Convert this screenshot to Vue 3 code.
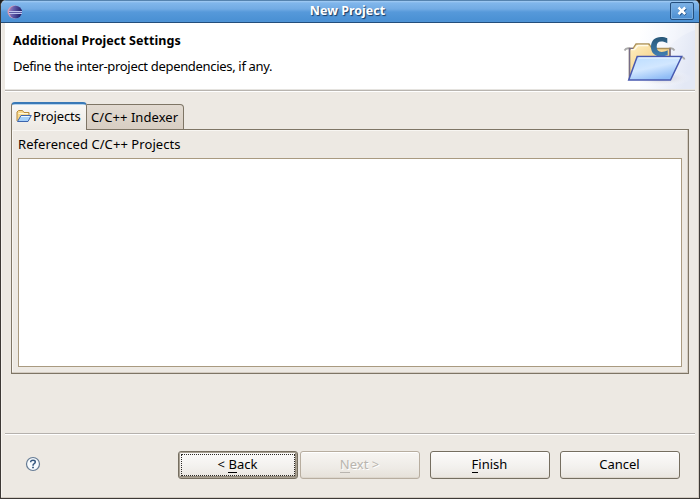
<script setup>
const buttons = [
  { before: '< ', key: 'B', after: 'ack', kind: 'default' },
  { before: '', key: 'N', after: 'ext >', kind: 'disabled' },
  { before: '', key: 'F', after: 'inish', kind: 'finish' },
  { before: 'Cancel', key: '', after: '', kind: 'cancel' },
]
</script>

<template>
  <div class="window">
    <header class="titlebar">
      <svg class="logo" width="16" height="16" viewBox="0 0 16 16">
        <defs>
          <linearGradient id="orb" x1="0" x2="1" y1="0" y2="0.2">
            <stop offset="0" stop-color="#b487b8" /><stop offset=".4" stop-color="#625cab" /><stop offset="1" stop-color="#22226d" />
          </linearGradient>
        </defs>
        <ellipse cx="7.5" cy="8" rx="7" ry="6.5" fill="#d79bb5" />
        <ellipse cx="8.500" cy="8" rx="6.500" ry="6.300" fill="url(#orb)" />
        <path d="M2 7.500H15M2 9.500H15" stroke="#bfc5ed" stroke-width="1" />
        <path d="M2 8.500H15" stroke="#5959a1" stroke-width="1" />
      </svg>
      <h1>New Project</h1>
      <button class="close" aria-label="Close">
        <svg width="22" height="16" viewBox="0 0 22 16">
          <path d="M8.300 5.300l6.400 6.400M14.700 5.300l-6.400 6.400" stroke="#24548b" stroke-width="3" />
          <path d="M7.500 4.500l6.700 6.700M14.200 4.500l-6.700 6.700" stroke="#fff" stroke-width="2.500" />
        </svg>
      </button>
    </header>

    <section class="banner">
      <div class="banner-text">
        <h2>Additional Project Settings</h2>
        <p>Define the inter-project dependencies, if any.</p>
      </div>
      <svg class="banner-art" width="75" height="66" viewBox="620 23 75 66">
        <defs>
          <linearGradient id="sweep" x1="0" y1="0" x2="1" y2="0.300">
            <stop offset="0" stop-color="#fff" /><stop offset=".4" stop-color="#f7f9fe" /><stop offset="1" stop-color="#e3e8f5" />
          </linearGradient>
          <linearGradient id="back" x1="0" x2="1" y1="0" y2="1">
            <stop offset="0" stop-color="#fff0c3" /><stop offset="1" stop-color="#edbe63" />
          </linearGradient>
          <linearGradient id="front" x1="0" x2="0.500" y1="0" y2="1">
            <stop offset="0" stop-color="#b9dcff" /><stop offset=".55" stop-color="#d2e7ff" /><stop offset="1" stop-color="#8fbcf6" />
          </linearGradient>
          <linearGradient id="letter" x1="0" x2="0" y1="0" y2="1">
            <stop offset="0" stop-color="#285778" /><stop offset="1" stop-color="#4280b3" />
          </linearGradient>
          <radialGradient id="shade"><stop offset="0" stop-color="#bcbccb" /><stop offset="1" stop-color="#fff" stop-opacity="0" /></radialGradient>
        </defs>
        <path d="M640 23H695V89H640Z" fill="url(#sweep)" />
        <path d="M695 23V30Q672 38 660 60V23Z" fill="#fff" opacity=".25" />
        <ellipse cx="662" cy="78" rx="30" ry="8" fill="url(#shade)" />
        <path d="M624.500 50.500Q626 47.500 630 48.500M669 48.500Q673 47.500 674.500 50.500M680 57.500Q684 56.500 684.500 59.500" fill="none" stroke="#aaa" stroke-width="1.800" />
        <path d="M629.500 79V48.500H633L636 44H649L652 48.500H670V79Z" fill="url(#back)" stroke="#ad925b" stroke-width="1.300" />
        <path d="M629.500 79V48.500H633M670 48.500V57" fill="none" stroke="#766d87" stroke-width="1.500" />
        <path d="M631 49.700H634.500L638 45.500H648" fill="none" stroke="#fffbe9" stroke-width="1.300" />
        <path d="M667.300 38.200V43.200C665.300 42.100 663.400 41.500 661.400 41.500C658.100 41.500 656.700 43.300 656.700 46.700C656.700 50.100 658.300 51.900 661.600 51.900C663.800 51.900 665.600 51.400 667.700 50.200V55C665.700 55.900 663.200 56.400 660.600 56.400C654.700 56.400 651 52.700 651 46.800C651 40.700 654.900 37 661 37C663.500 37 665.500 37.400 667.300 38.200Z" fill="url(#letter)" />
        <path d="M637.200 56.500H681.700L670.500 80.100H628.700Z" fill="url(#front)" stroke="#4859b0" stroke-width="1.500" />
        <path d="M638.500 58H679.500" stroke="#edf7ff" stroke-width="1.200" />
      </svg>
    </section>

    <main class="content">
      <nav class="tabs">
        <div class="tab active">
          <svg width="16" height="16" viewBox="0 0 16 16">
            <path d="M1 13V4L2.500 2.500H6.500L8 4.500H13V7" fill="#f8d98c" stroke="#b98b3d" />
            <path d="M2.500 5.500H12" stroke="#fff8dc" />
            <path d="M5 7.500H15.300L12 13.500H1.500Z" fill="#a4d0fa" stroke="#3d65ad" />
            <path d="M5 8.500H13.500" stroke="#edf8ff" />
          </svg>
          <span class="t-projects">Projects</span>
        </div>
        <div class="tab"><span class="t-indexer">C/C++ Indexer</span></div>
      </nav>
      <section class="panel">
        <div class="list-label"><span>Referenced C/C++ Projects</span></div>
        <div class="list"></div>
      </section>
    </main>

    <footer class="footer">
      <svg class="help" width="16" height="16" viewBox="0 0 16 16">
        <circle cx="8" cy="8" r="6.500" fill="#f7fbfe" stroke="#657b94" stroke-width="1.200" />
        <path d="M5.700 6.200V5.500Q5.900 4.300 8 4.300Q10.300 4.300 10.300 6Q10.300 7 9.200 7.700Q8 8.400 8 9.700" fill="none" stroke="#34577f" stroke-width="1.500" />
        <path d="M7.100 10.700H8.900V12.300H7.100Z" fill="#34577f" />
      </svg>
      <div class="actions">
        <button v-for="b in buttons" :key="b.kind" :class="['btn', b.kind]" :disabled="b.kind === 'disabled'">
          <span class="caption">{{ b.before }}<span v-if="b.key" class="key">{{ b.key }}</span>{{ b.after }}</span>
        </button>
      </div>
    </footer>
  </div>
</template>

<style>
body { margin: 0; background: #1d1d1d; overflow: hidden; }
</style>

<style scoped>
* { box-sizing: border-box; }
h1, h2, p { margin: 0; }
.window {
  width: 700px; height: 499px; display: flex; flex-direction: column;
  background: #ede9e3; border: 1px solid #3d3936; border-top: 0;
  border-radius: 6px 6px 0 0; overflow: hidden;
  font: 13px/16px "Noto Sans", sans-serif; color: #000;
  box-shadow: inset -1px -1px #d2cbc2, inset 1px 0 #f6f3ef;
}
.titlebar {
  height: 23px; flex: none; display: grid; grid-template-columns: 30px 1fr 30px;
  background: linear-gradient(#a4cdf4 0, #80b6eb 2px, #72abe4 8px, #5699da 11px, #4b91d4 19px, #4f94d5 21px);
  border-top: 1px solid #5583af; border-bottom: 1px solid #234e7b;
}
.logo { margin: 3px 0 0 6px; }
.titlebar h1 {
  text-align: center; font-size: 12.5px; line-height: 20px; font-weight: 700;
  color: #fff; text-shadow: 1px 1px 1px #173b63; padding-right: 5px;
}
.close {
  width: 24px; height: 18px; margin: 1px 0 0 1px; padding: 0;
  border: 1px solid #244e7d; border-radius: 2px;
  background: linear-gradient(#7db2e7, #4b8ed1); box-shadow: inset 0 0 0 1px #79aee1;
}
.close svg { display: block; }
.banner {
  height: 69px; flex: none; margin: 0 4px; display: flex; justify-content: space-between;
  background: #fff; border-bottom: 1px solid #fff; box-shadow: inset 0 -1px #b8b4af, inset 0 -2px #e5e3df;
}
.banner-text { padding: 10px 0 0 8px; white-space: nowrap; }
.banner-text h2 { font-size: 12.5px; line-height: 16px; font-weight: 700; letter-spacing: .06px; }
.banner-text p { margin-top: 9px; letter-spacing: -.32px; }
.banner-art { flex: none; }
.content { margin: 10px 10px 0; height: 272px; flex: none; }
.tabs { display: flex; align-items: flex-end; height: 28px; position: relative; z-index: 1; }
.tab {
  height: 26px; width: 97px; display: flex; align-items: center; padding: 0 0 1px 4px;
  border: 1px solid #7e7565; border-left: 0; border-radius: 0 4px 0 0; white-space: nowrap;
  background: linear-gradient(#e2dad1, #d8cec3);
}
.tab.active {
  width: 76px; height: 28px; padding: 0 0 3px 4px; border-left: 1px solid #7e7565; border-bottom: 0;
  border-top: 2px solid #3979b7; border-radius: 4px 4px 0 0; background: linear-gradient(#74addf 0, #f8f7f5 1px, #ede9e3);
}
.tab svg { flex: none; margin: 0 1px 0 0; }
.t-projects { letter-spacing: -.12px; }
.t-indexer { letter-spacing: .06px; }
.panel {
  margin-top: -1px; height: 245px; border: 1px solid #7e7565; padding: 6px;
  display: flex; flex-direction: column; box-shadow: inset -1px -1px #d4ccc2, inset 1px 1px #f8f6f2;
}
.list-label { height: 22px; white-space: nowrap; letter-spacing: .07px; }
.list { flex: 1; border: 1px solid #a99a80; background: #fff; }
.footer {
  margin: 59px 4px 0; height: 64px; border-top: 1px solid #b5b1ad; box-shadow: inset 0 1px #fff;
  display: flex; justify-content: space-between;
}
.help { margin: 22px 0 0 20px; }
.actions { display: flex; padding: 17px 15px 0 0; }
.btn {
  width: 120px; height: 28px; margin: 0 0 0 10px; padding: 0 1px 2px 0; text-align: center; font: inherit; color: #000;
  border: 1px solid #756e60; border-radius: 3px; background: linear-gradient(#fcfbfa, #f2f0ed 60%, #e9e5df);
  box-shadow: inset 0 -1px #ddd7ce, inset 0 1px #fff;
}
.btn.default { position: relative; box-shadow: inset 0 0 0 1px #aaa294, inset -2px -2px #938a7c; }
.btn.default::after { content: ''; position: absolute; inset: 2px; border: 1px dotted #2b2926; }
.btn.disabled { margin-left: 2px; border-color: #b7ad9f; color: #b9b5af; text-shadow: 1px 1px #fff; background: linear-gradient(#f7f5f2, #eeebe6 60%, #e6e1d9); }
.caption { display: block; height: 17px; }
.key { box-shadow: 0 1px currentColor; display: inline-block; height: 16px; line-height: 16px; }
</style>
